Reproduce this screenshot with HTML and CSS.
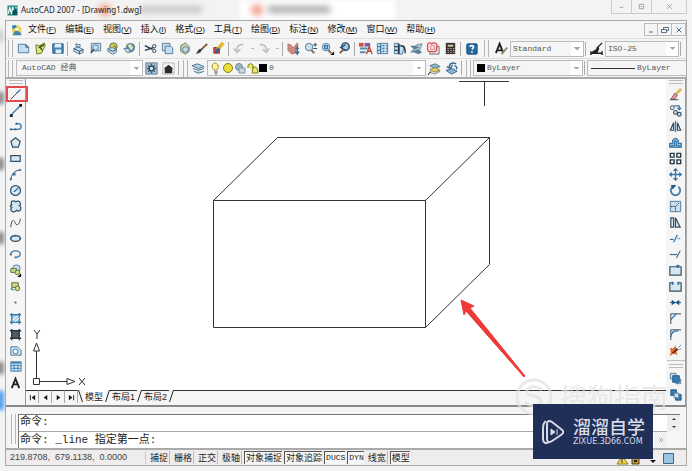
FILE: index.html
```html
<!DOCTYPE html>
<html lang="zh-CN">
<head>
<meta charset="utf-8">
<title>AutoCAD 2007 - [Drawing1.dwg]</title>
<link rel="stylesheet" href="styles.css">
</head>
<body>
<div class="desk" aria-hidden="true"><i class="tab"></i><i class="blob b1"></i><i class="smudge s1"></i><i class="blob b2"></i><i class="smudge s2"></i><i class="dot e0"></i><i class="dot e1"></i><i class="dot e2"></i><i class="dot e3"></i><i class="dot e4"></i><i class="dot blue"></i></div>
<header class="title">
  <svg class="logo" viewBox="0 0 12 12"><rect width="11" height="11" x=".5" y=".5" fill="#238b86"/><path d="M1 10L3 3l2 7 1-8 2 6 2-6" fill="none" stroke="#fff" stroke-width="1.2"/><path d="M6 7l3-4 2 4v4H6z" fill="#0b5260"/></svg>
  <h1>AutoCAD 2007 - [Drawing1.dwg]</h1>
  <div class="winbtns"><button aria-label="最小化"><svg viewBox="0 0 8 8"><path d="M2 5h4"/></svg></button><button aria-label="最大化"><svg viewBox="0 0 8 8"><path d="M1.500 1.500h5v5h-5zM3 4h2"/></svg></button><button class="wide" aria-label="关闭"><svg viewBox="0 0 8 8"><path d="M1.500 1.500l5 5M6.500 1.500l-5 5"/></svg></button></div>
</header>
<div class="frame">
  <nav class="menu">
    <svg class="doc" viewBox="0 0 14 14"><path d="M1 4l7-3 4 4v8H2z" fill="#e9cf56"/><path d="M1 2l4-1 2 3-5 2z" fill="#3b82bb"/><path d="M3 11c2-5 5-3 8-1l1 3H2z" fill="#3d86b7"/><path d="M4 5l4-1 2 3-4 1z" fill="#fff7b6"/></svg>
    <button>文件<small>(<u>F</u>)</small></button><button>编辑<small>(<u>E</u>)</small></button><button>视图<small>(<u>V</u>)</small></button><button>插入<small>(<u>I</u>)</small></button><button>格式<small>(<u>O</u>)</small></button><button>工具<small>(<u>T</u>)</small></button><button>绘图<small>(<u>D</u>)</small></button><button>标注<small>(<u>N</u>)</small></button><button>修改<small>(<u>M</u>)</small></button><button>窗口<small>(<u>W</u>)</small></button><button>帮助<small>(<u>H</u>)</small></button>
    <div class="docbtns"><button aria-label="最小化文档"><svg viewBox="0 0 8 8"><path d="M2 6h4"/></svg></button><button aria-label="还原文档"><svg viewBox="0 0 8 8"><path d="M2.500 3V1.500h5v3H6M.5 3.500h5v3h-5z"/></svg></button><button aria-label="关闭文档"><svg viewBox="0 0 8 8"><path d="M1.500 1.500l5 5M6.500 1.500l-5 5"/></svg></button></div>
  </nav>

  <div class="bar">
    <i class="grip"></i>
    <button class="t" aria-label="新建"><svg viewBox="0 0 16 16"><path class="lf" d="M2.500 3.500h8l3 3v6h-11z"/><path class="k" d="M10.500 3.500v3h3"/></svg></button>
    <button class="t" aria-label="打开"><svg viewBox="0 0 16 16"><path d="M3 4l4 1 5-3 1 3-4 8-5 1z" fill="#dce77a" stroke="#6d7b20"/><path d="M6 7l6-3M7 6l3 4" stroke="#344b24" stroke-width="1.500"/></svg></button>
    <button class="t" aria-label="保存"><svg viewBox="0 0 16 16"><path d="M3 3h11v10H3z" fill="#4587ba" stroke="#235378"/><path d="M5 3h7v4H5zM6 9h6v4H6z" fill="#dff1fd"/></svg></button>
    <i class="sep"></i>
    <button class="t" aria-label="打印"><svg viewBox="0 0 16 16"><path class="lf" d="M5 3l5 1-1 3 4 2v3l-4 2-6-3V8l3-1z"/><path class="k" d="M3 8l6 3 4-2M9 11v3M6 6l3 1"/></svg></button>
    <button class="t" aria-label="打印预览"><svg viewBox="0 0 16 16"><path class="lf" d="M3.500 2.500h10v8h-10z"/><circle class="lf" cx="8" cy="7" r="3"/><path class="k2" d="M6 9l-3 4"/></svg></button>
    <button class="t" aria-label="发布"><svg viewBox="0 0 16 16"><circle cx="9" cy="6" r="4" fill="#dbce4c" stroke="#57683e"/><path class="lf" d="M3 8l5-1 4 2v3l-4 2-5-3z"/><path class="k" d="M4 9l4 2 4-2M9 5l3 2"/></svg></button>
    <button class="t" aria-label="网络发布"><svg viewBox="0 0 16 16"><circle cx="9" cy="7" r="5" fill="#608995"/><path d="M6 5l3-2 3 4-2 3z" fill="#d8e7be"/><path class="lf" d="M2 8h5l2 4H5z"/></svg></button>
    <i class="sep"></i>
    <button class="t" aria-label="剪切"><svg viewBox="0 0 16 16"><path class="k2" d="M2 5l8 4M2 10l9-3"/><circle class="k" cx="12" cy="5.500" r="1.800"/><circle class="k" cx="12" cy="10.500" r="1.800"/></svg></button>
    <button class="t" aria-label="复制"><svg viewBox="0 0 16 16"><path class="lf" d="M2.500 2.500h8v8h-8z"/><path class="lf" d="M5.500 5.500h6l2 2v6h-8z"/></svg></button>
    <button class="t" aria-label="粘贴"><svg viewBox="0 0 16 16"><path d="M4 5l5-3 4 4v5l-4 3-5-3z" fill="#ccd6b2" stroke="#697653"/><circle class="lf" cx="9" cy="9" r="3"/></svg></button>
    <button class="t" aria-label="特性匹配"><svg viewBox="0 0 16 16"><path d="M14 3L8 9" stroke="#7d592e" stroke-width="2"/><path d="M9 8l-2 4-5 2 3-5z" fill="#343638"/></svg></button>
    <button class="t" aria-label="块编辑器"><svg viewBox="0 0 16 16"><path d="M3 7h6v6H3z" fill="#e24a3d" stroke="#8e302b"/><path d="M7 9l6-7" stroke="#e5b92c" stroke-width="4"/><path d="M5 12l4-4" stroke="#315f9a" stroke-width="3"/></svg></button>
    <i class="sep"></i>
    <button class="t" aria-label="放弃"><svg viewBox="0 0 16 16"><path class="g" d="M12 4C7 3 5 6 5 10M2 8l3 4 4-3"/></svg></button><button class="drop" aria-label="放弃列表"></button>
    <button class="t" aria-label="重做"><svg viewBox="0 0 16 16"><path class="g" d="M3 4c5-1 7 2 7 6M6 9l4 3 3-4"/></svg></button><button class="drop" aria-label="重做列表"></button>
    <i class="sep"></i>
    <button class="t" aria-label="平移"><svg viewBox="0 0 16 16"><path d="M2 3l3 1 3 3 4-5 1 2-2 5-1 4-4 1-4-4z" fill="#d08a7b" stroke="#9b6a60" stroke-width=".7"/><path d="M12 5v8M10 11l2 3 2-3M10 8h4" fill="none" stroke="#3d6f9b" stroke-width="1.500"/></svg></button>
    <button class="t" aria-label="实时缩放"><svg viewBox="0 0 16 16"><circle class="lf" cx="6.500" cy="6.500" r="4"/><path d="M9 10l3 3" stroke="#805d42" stroke-width="2"/><path class="k" d="M11 4h4M13 2v4M11 8h4"/></svg></button>
    <button class="t" aria-label="窗口缩放"><svg viewBox="0 0 16 16"><circle class="lf" cx="6.500" cy="6.500" r="4"/><path class="b2" d="M5 5h3v3H5z"/><path d="M9 10l3 3" stroke="#805d42" stroke-width="2"/><path d="M15 11v4h-4z" fill="#111"/></svg></button>
    <button class="t" aria-label="缩放上一个"><svg viewBox="0 0 16 16"><circle cx="9" cy="6" r="4" fill="#a4cae4" stroke="#29435e" stroke-width="1.500"/><path d="M9 4L4 7l5 3" stroke="#28517b" stroke-width="1.500" fill="none"/><path d="M7 9l-4 4" stroke="#805d42" stroke-width="2"/></svg></button>
    <i class="sep"></i>
    <button class="t" aria-label="特性"><svg viewBox="0 0 16 16"><path d="M1 2h5v4H1z" fill="#d35248"/><path d="M7 2h6v4H7z" fill="#845fa6"/><path d="M2 7h8v2H2zM2 11h6v2H2z" fill="#5989ac"/><path d="M9 14l3-8 3 8M10 11h4" stroke="#b2473d" stroke-width="1.500" fill="none"/></svg></button>
    <button class="t" aria-label="设计中心"><svg viewBox="0 0 16 16"><path class="lf" d="M2.500 2.500h11v11h-11z"/><path class="b2" d="M6 3v10M8 5h2M12 5h1M8 8h2M12 8h1M8 11h2M12 11h1M3 6h2M3 10h2"/></svg></button>
    <button class="t" aria-label="工具选项板"><svg viewBox="0 0 16 16"><path class="lf" d="M2.500 2.500h5v11h-5zM8 4l5 2-2 8H8z"/><path class="k2" d="M7 3v11M9 5c5 0 5 3 5 8M3 6h3M3 10h3"/></svg></button>
    <button class="t" aria-label="图纸集"><svg viewBox="0 0 16 16"><path d="M2 12l9-1 3-8-6 1z" fill="#a6c8d9" stroke="#7890a0"/><path d="M1 5h6l4 2-5 2zM3 11l7-2 4 3-4 2z" fill="#577e96"/></svg></button>
    <button class="t" aria-label="标记集"><svg viewBox="0 0 16 16"><path d="M6 6h8v8H4v-2" fill="#ddd" stroke="#777"/><path d="M2 3q2-2 4 0 2-2 5 0 2 2 0 4 1 3-1 4-2 1-4 0-3 1-4-1-1-2 0-3-1-2 0-4z" fill="#fbe4e3" stroke="#db4b54" stroke-width="1.300"/><path d="M5 5h4v4H5z" fill="none" stroke="#db8a8c"/></svg></button>
    <button class="t" aria-label="计算器"><svg viewBox="0 0 16 16"><path d="M3 2h10v12H3z" fill="#3d302e"/><path d="M5 4h6v2H5z" fill="#c6d6b1"/><path d="M5 8h1M8 8h1M11 8h1M5 10h1M8 10h1M11 10h1M5 12h1M8 12h1M11 12h1" stroke="#fff"/></svg></button>
    <i class="sep"></i>
    <button class="t" aria-label="帮助"><svg viewBox="0 0 16 16"><rect x="3" y="3" width="11" height="11" rx="1" fill="#246aa2" stroke="#174e7c"/><path d="M6 6c1-2 5-1 4 1L8.500 9M8.500 11v1.500" stroke="#fff" stroke-width="1.800" fill="none"/></svg></button>
    <i class="grip wide"></i>
    <button class="t" aria-label="文字样式"><svg viewBox="0 0 16 16"><path d="M2 13L6 3l4 10M4 10h5" fill="none" stroke="#222" stroke-width="2"/><path d="M14 7l-6 7" stroke="#8d8b64" stroke-width="2"/></svg></button>
    <select class="combo w74" aria-label="文字样式列表"><option>Standard</option></select>
    <i class="sep"></i>
    <button class="t" aria-label="标注样式"><svg viewBox="0 0 16 16"><path d="M14 2L8 8M2 13h12M2 11v4M14 11v4" fill="none" stroke="#222" stroke-width="1.500"/><path d="M10 6l1 2-2 5H4l-2-1 5-3z" fill="#222"/></svg></button>
    <select class="combo w74" aria-label="标注样式列表"><option>ISO-25</option></select>
    <i class="sep"></i>
  </div>

  <div class="bar low">
    <i class="grip"></i>
    <select class="combo work-space" aria-label="工作空间"><option>AutoCAD 经典</option></select>
    <button class="t" aria-label="工作空间设置"><svg viewBox="0 0 16 16"><path d="M2 2h12v12H2z" fill="#a9c2d5" stroke="#5f7e96"/><circle cx="8" cy="8" r="2.500" fill="#dceaf2" stroke="#254358" stroke-width="1.500"/><path d="M8 3v2M8 11v2M3 8h2M11 8h2M4.500 4.500l1.500 1.500M11.500 4.500L10 6M4.500 11.500L6 10M11.500 11.500L10 10" stroke="#35566f" stroke-width="1.500"/></svg></button>
    <button class="t" aria-label="我的工作空间"><svg viewBox="0 0 16 16"><path d="M2 2h12v12H2z" fill="none" stroke="#999" stroke-dasharray="2 1"/><path d="M3 8l5-4 5 4h-1v5H4V8z" fill="#292b2d"/></svg></button>
    <i class="sep"></i><i class="grip"></i>
    <button class="t" aria-label="图层特性管理器"><svg viewBox="0 0 16 16"><path d="M1 5l6-2 7 3-6 2zM2 8l6 2 6-2M3 11l5 2 6-2" fill="#b9d2e4" stroke="#4b7390"/></svg></button>
    <div class="combo layer"><svg viewBox="0 0 58 14"><path d="M5 9C1 5 4 2 6 2s5 3 2 7z" fill="#fff3a1" stroke="#a78d32"/><path d="M5 11h4M6 13h2" stroke="#555"/><circle cx="19" cy="7" r="4.500" fill="#eadf32" stroke="#897f23"/><circle cx="30" cy="6" r="3.500" fill="#9eb7c7" stroke="#6e899c"/><path d="M30 7h6v5h-6z" fill="#c9d7e0" stroke="#7c91a0"/><path d="M39 7V4q3-3 5 0v4M44 6q5-1 5 6h-6z" fill="#ebe568" stroke="#857f25"/><path d="M50 3h8v8h-8z" fill="#000"/></svg><select aria-label="图层"><option>0</option></select></div>
    <button class="t" aria-label="置为当前图层"><svg viewBox="0 0 16 16"><path d="M3 5l6-2 5 3-6 2z" fill="#91b7cf" stroke="#557a91"/><path d="M3 9l6-2 5 3-6 2z" fill="#e1cd6a" stroke="#94843b"/><path d="M3 12l5 2 6-3" stroke="#668797" fill="none"/><path d="M1 15l3-4" stroke="#111"/></svg></button>
    <button class="t" aria-label="上一个图层"><svg viewBox="0 0 16 16"><path d="M2 10l7-2 5 3-6 3z" fill="#8ab4d2" stroke="#426b8b"/><path d="M13 3C8 1 5 3 6 7M3 6l4 2 2-4M11 5q4 1 2 4" stroke="#356c9a" stroke-width="1.500" fill="none"/></svg></button>
    <i class="sep"></i><i class="grip"></i>
    <div class="combo color"><i class="swatch"></i><select aria-label="颜色"><option>ByLayer</option></select></div>
    <i class="sep"></i>
    <div class="combo ltype"><i class="line"></i><select aria-label="线型"><option>ByLayer</option></select></div>
  </div>

  <div class="work">
    <aside class="pal">
      <i class="hgrip"></i>
      <button class="on" aria-label="直线"><svg viewBox="0 0 16 16"><path class="k" d="M3 13L13 3"/><path class="b2" d="M9 7l4-4"/></svg></button>
      <button aria-label="构造线"><svg viewBox="0 0 16 16"><path class="b2" d="M3 13L13 3"/><path d="M2 12h3v3H2zM12 1h3v3h-3z" fill="#222"/></svg></button>
      <button aria-label="多段线"><svg viewBox="0 0 16 16"><path class="b2" d="M3 11h8c4 0 4-6 0-6H9"/><path d="M2 10h2v2H2zM7 10h2v2H7zM8 4h2v2H8z" fill="#235a91"/></svg></button>
      <button aria-label="正多边形"><svg viewBox="0 0 16 16"><path class="lfk" d="M8 3l5 4-2 6H5L3 7z"/></svg></button>
      <button aria-label="矩形"><svg viewBox="0 0 16 16"><path class="lfk" d="M3 5h10v6H3z"/><path class="b2" d="M2 11h2M12 5h2"/></svg></button>
      <button aria-label="圆弧"><svg viewBox="0 0 16 16"><path class="k" d="M3 14C3 8 7 4 13 3"/><path d="M2 12h2v2H2zM5 6h3v3H5zM12 2h2v2h-2z" fill="#316da5"/></svg></button>
      <button aria-label="圆"><svg viewBox="0 0 16 16"><circle class="lfk" cx="8" cy="8" r="5.300"/><path class="b2" d="M7 9l4-4M6 9h2"/></svg></button>
      <button aria-label="修订云线"><svg viewBox="0 0 16 16"><path class="lfk" d="M4 6q-2-4 2-4 2 0 2 1 4-2 5 1 1 2-1 3 3 2 1 5-2 2-4 0-2 3-5 1-2-2 0-4-3-1 0-3z"/></svg></button>
      <button aria-label="样条曲线"><svg viewBox="0 0 16 16"><path class="k" d="M3 13C4 2 7 6 8 9s5 1 5-5"/></svg></button>
      <button aria-label="椭圆"><svg viewBox="0 0 16 16"><ellipse class="lfk" cx="8" cy="8" rx="5" ry="3"/><path d="M2 7h2v2H2zM12 7h2v2h-2zM7 4h2v2H7z" fill="#316da5"/></svg></button>
      <button aria-label="椭圆弧"><svg viewBox="0 0 16 16"><path class="b2" d="M3 8c0-5 10-5 10-1 0 3-2 4-5 4"/><path d="M2 7h2v2H2zM7 10h2v2H7z" fill="#316da5"/></svg></button>
      <button aria-label="插入块"><svg viewBox="0 0 16 16"><circle class="lf" cx="9" cy="6" r="4"/><path class="gr" d="M3 6h6v4H3z"/><circle class="gr" cx="10" cy="10" r="2.500"/><path d="M14 11v4h-4z" fill="#111"/></svg></button>
      <button aria-label="创建块"><svg viewBox="0 0 16 16"><path class="gr" d="M4 4h7v5H4z"/><circle class="gr" cx="10" cy="10" r="2.500"/><path class="b2" d="M3 10l3 2"/></svg></button>
      <button aria-label="点"><svg viewBox="0 0 16 16"><path d="M7 7h2v2H7z" fill="#2869a5"/></svg></button>
      <button aria-label="图案填充"><svg viewBox="0 0 16 16"><path d="M4 4h8v8H4z" fill="#b7d6e9"/><path class="b2" d="M2 4h12M2 12h12M4 2v12M12 2v12"/><path d="M5 10l5-5M7 12l5-5" stroke="#fff"/></svg></button>
      <button aria-label="渐变色"><svg viewBox="0 0 16 16"><path d="M4 4h8v8H4z" fill="#525b62"/><path class="k2" d="M2 4h12M2 12h12M4 2v12M12 2v12"/></svg></button>
      <button aria-label="面域"><svg viewBox="0 0 16 16"><path class="lf" d="M3 4h7l4 4v5H3z"/><circle cx="8" cy="9" r="2.500" fill="#fff" stroke="#3477ad"/></svg></button>
      <button aria-label="表格"><svg viewBox="0 0 16 16"><path class="lf" d="M3 3h11v10H3z"/><path class="b2" d="M3 4h11"/><path d="M6.500 4v9M10.500 4v9M3 7h11M3 10h11" stroke="#397aad" stroke-width=".8"/></svg></button>
      <button aria-label="多行文字"><svg viewBox="0 0 16 16"><path d="M4 14L8 4l4 10M6 10h5" fill="none" stroke="#222" stroke-width="2"/></svg></button>
    </aside>
    <main class="view">
      <div class="canvas">
        <svg class="model" width="641" height="312" viewBox="0 0 641 312">
          <g fill="none" stroke="#333"><path d="M187.500 121.500h212v127h-212zM187.500 121.500L251.500 58.500h212v127L399.500 248.500M399.500 121.500L463.500 58.500"/><path d="M433 2.500h50M458.500 2v25"/></g>
          <path d="M435 221l13 6-4 2 55 68-1 1-58-66-2 4z" fill="#ed3a36" stroke="#ed3a36"/>
        </svg>
        <svg class="ucs" width="70" height="64" viewBox="0 0 70 64"><path d="M7.500 51.500h6v6h-6zM10.500 51V24M14 54.500h27M10.500 16l3 8h-6zM49 54.500l-8-3v6zM8 3l3 4 3-4M11 7v5M53 51l6 7M59 51l-6 7" fill="none" stroke="#333"/></svg>
      </div>
      <div class="tabs">
        <button class="n" aria-label="第一个"><svg viewBox="0 0 8 8"><path d="M1 1h1v6H1zM7 1v6L3 4z"/></svg></button><button class="n" aria-label="上一个"><svg viewBox="0 0 8 8"><path d="M6 1v6L2 4z"/></svg></button><button class="n" aria-label="下一个"><svg viewBox="0 0 8 8"><path d="M2 1v6l4-3z"/></svg></button><button class="n" aria-label="最后一个"><svg viewBox="0 0 8 8"><path d="M1 1v6l4-3zM6 1h1v6H6z"/></svg></button>
        <svg class="sl" viewBox="0 0 5 12"><path d="M.5 0l4 12"/></svg><button class="cur">模型</button><svg class="sl" viewBox="0 0 5 12"><path d="M4.500 0l-4 12"/></svg><button>布局1</button><svg class="sl" viewBox="0 0 5 12"><path d="M4.500 0l-4 12"/></svg><button>布局2</button><svg class="sl" viewBox="0 0 5 12"><path d="M4.500 0l-4 12"/></svg><i class="rest"></i>
      </div>
    </main>
    <aside class="pal right">
      <i class="hgrip"></i>
      <button aria-label="删除"><svg viewBox="0 0 16 16"><path d="M14 2L8 8" stroke="#d9b957" stroke-width="3"/><path d="M7 7l3 2-3 4H3z" fill="#e29a98" stroke="#774850" stroke-width=".8"/><path class="k" d="M2 13.500h9"/></svg></button>
      <button aria-label="复制对象"><svg viewBox="0 0 16 16"><circle class="k" cx="4.500" cy="5" r="2"/><circle class="lfk" cx="8" cy="10" r="2"/><circle class="lfk" cx="12" cy="12" r="2"/><path class="b2" d="M6 3h6v4M10 5l2 2 2-2"/></svg></button>
      <button aria-label="镜像"><svg viewBox="0 0 16 16"><path class="lfk" d="M6 4v8H2.500zM10 4v8h3.500z"/><path class="b2" d="M8 2v12"/></svg></button>
      <button aria-label="偏移"><svg viewBox="0 0 16 16"><path class="lf" d="M2 13V9h3V6q3-5 6 0v3h3v4z"/><path class="b2" d="M2 13V9h3V6q3-5 6 0v3h3v4zM4 12v-1h3V7q1-2 2 0v4h3v1"/></svg></button>
      <button aria-label="阵列"><svg viewBox="0 0 16 16"><path class="k2" d="M2.500 2.500h4v4h-4zM9.500 2.500h4v4h-4zM2.500 9.500h4v4h-4zM9.500 9.500h4v4h-4z"/></svg></button>
      <button aria-label="移动"><svg viewBox="0 0 16 16"><path class="b2" d="M8 3v10M3 8h10"/><path d="M8 1l3 3H5zM8 15l-3-3h6zM1 8l3-3v6zM15 8l-3 3V5z" fill="#356f9f"/></svg></button>
      <button aria-label="旋转"><svg viewBox="0 0 16 16"><path d="M5 4a5 5 0 1 0 6 0" fill="none" stroke="#4a7fa7" stroke-width="2"/><path d="M3 2h6L5 7z" fill="#285982"/></svg></button>
      <button aria-label="缩放"><svg viewBox="0 0 16 16"><path class="lf" d="M2.500 2.500h11v11h-11z"/><path class="k" d="M3 8h5v5M8 8l4-4" stroke-dasharray="2 1"/></svg></button>
      <button aria-label="拉伸"><svg viewBox="0 0 16 16"><path class="lfk" d="M3 3h3v10H3zM8 3l5 10H8z"/></svg></button>
      <button aria-label="修剪"><svg viewBox="0 0 16 16"><path class="b2" d="M2 9h4M6 12l4-8"/><path class="b2" d="M10 8h4" stroke-dasharray="1 1"/></svg></button>
      <button aria-label="延伸"><svg viewBox="0 0 16 16"><path class="b2" d="M2 8h8"/><path class="k" d="M9 12l4-8"/></svg></button>
      <button aria-label="打断于点"><svg viewBox="0 0 16 16"><path class="lfk" d="M2 4h12v9H2z"/><path d="M9 2h3v3H9z" fill="#356f9f"/></svg></button>
      <button aria-label="打断"><svg viewBox="0 0 16 16"><path class="lfk" d="M5 4H2v9h12V4h-3"/><path d="M4 3h2v3H4zM10 3h2v3h-2z" fill="#356f9f"/></svg></button>
      <button aria-label="合并"><svg viewBox="0 0 16 16"><path class="b2" d="M2 8h12"/><path d="M4 5l4 3-4 3zM12 5L8 8l4 3z" fill="#20547e"/></svg></button>
      <button aria-label="倒角"><svg viewBox="0 0 16 16"><path class="k" d="M3 14V3h11"/><path class="b2" d="M3 9l6-6"/></svg></button>
      <button aria-label="圆角"><svg viewBox="0 0 16 16"><path class="k" d="M3 14V3h11"/><path class="b2" d="M3 11q0-7 8-7"/></svg></button>
      <button aria-label="分解"><svg viewBox="0 0 16 16"><path d="M2 5l3 1 3-3 1 3 3 1-3 2 1 4-4-2-4 3 1-4z" fill="#df6e30"/><path d="M5 11l5-5" stroke="#692d26" stroke-width="2"/><path d="M11 5l3-3M12 7l2-1" stroke="#6089a2"/></svg></button>
      <i class="hr"></i><i class="hgrip"></i>
      <button aria-label="前置"><svg viewBox="0 0 16 16"><path class="lf" d="M2.500 2.500h6v6h-6zM8.500 8.500h5v5h-5z"/><path d="M5 5h7v7H5z" fill="#397baf" stroke="#245c8a"/></svg></button>
      <button aria-label="后置"><svg viewBox="0 0 16 16"><path d="M3 3h6v6H3zM8 8h6v6H8z" fill="#397baf" stroke="#245c8a"/><path class="lf" d="M6.500 6.500h5v5h-5z"/></svg></button>
    </aside>
  </div>

  <section class="cmd">
    <i class="grip"></i>
    <div class="lines"><output>命令:</output><div class="prompt"><input aria-label="命令行" value="命令: _line 指定第一点:"><button aria-label="向右滚动"><svg viewBox="0 0 6 6"><path d="M1 1l2 2-2 2M3 1l2 2-2 2"/></svg></button></div></div>
    <div class="scroll"><i class="up"></i><i class="down"></i></div>
  </section>
  <footer class="status">
    <output class="xy">219.8708,&nbsp; 679.1138,&nbsp; 0.0000</output>
    <button>捕捉</button><button>栅格</button><button>正交</button><button>极轴</button><button class="in">对象捕捉</button><button class="in">对象追踪</button><button class="in m">DUCS</button><button class="in m">DYN</button><button>线宽</button><button class="in">模型</button>
    <svg class="tray" viewBox="0 0 74 14"><path d="M11 13l5-8 6 8z" fill="#f4d84b" stroke="#927d28"/><path d="M16 8v4" stroke="#333"/><path d="M26 6h7v7h-7z" fill="#bb942b" stroke="#574515"/><path d="M28 10h3" stroke="#222" stroke-width="2"/><path d="M44 9h6l-3 3z" fill="#111"/><path d="M57.500 2.500h10v10h-10z" fill="#9dc4e2" stroke="#3d6687"/></svg>
  </footer>
</div>
<div class="ghost" aria-hidden="true"><svg viewBox="0 0 40 40"><circle cx="20" cy="20" r="17"/><path d="M28 13c-6-6-17-3-15 3 2 4 14 2 14 8 0 5-10 7-16 1"/></svg><span>搜狗指南</span></div>
<div class="brand">
  <svg viewBox="0 0 24 26"><path d="M5 2C2 4 2 7 2 12v8c0 4 3 5 6 3" fill="none" stroke="#d7dbe7" stroke-width="2"/><path d="M6 5c0-3 2-4 5-2l9 7c3 2 3 4 0 6l-9 6c-3 2-5 1-5-2z" fill="none" stroke="#d7dbe7" stroke-width="2"/><path d="M10 10l4 3-4 3zM16 10v6" fill="#d7dbe7" stroke="#d7dbe7"/></svg>
  <div><strong>溜溜自学</strong><small>ZIXUE.3D66.COM</small></div>
</div>
</body>
</html>
```

FILE: styles.css
```css
* { box-sizing: border-box; }
body {
  margin: 0;
  height: 100vh;
  min-height: 471px;
  padding: 0 5px 5px;
  display: flex;
  flex-direction: column;
  position: relative;
  overflow: hidden;
  background: #f3f3f3;
  color: #222;
  font: 9px/12px "Liberation Sans", "Noto Sans CJK SC", sans-serif;
}
button, select, input { font: inherit; color: inherit; margin: 0; padding: 0; border: 0; border-radius: 0; background: none; outline: 0; }
i { display: block; flex: none; }
svg { display: block; flex: none; }

/* blurred desktop showing through the glass border */
.desk { position: absolute; inset: 0; overflow: hidden; }
.desk i { position: absolute; }
.tab { left: 240px; top: 0; width: 155px; height: 20px; background: #fff; filter: blur(2px); }
.blob { width: 12px; height: 12px; top: 4px; border-radius: 50%; background: #f3a392; filter: blur(3px); }
.b1 { left: 99px; }
.b2 { left: 251px; }
.smudge { top: 6px; height: 7px; background: #aaa; filter: blur(3px); }
.s1 { left: 140px; width: 62px; opacity: .6; }
.s2 { left: 268px; width: 62px; }
.dot { left: -3px; width: 7px; height: 12px; background: #888; filter: blur(2px); }
.e0 { top: 92px; }
.e1 { top: 158px; }
.e2 { top: 232px; }
.e3 { top: 30px; opacity: .3; }
.e4 { top: 362px; }
.desk .blue { top: 391px; height: 19px; background: #4a9cf0; }

.title { position: relative; height: 20px; flex: none; display: flex; align-items: center; padding-left: 2px; }
.logo { width: 11px; height: 11px; }
.title h1 { margin: 0 auto 0 3px; font: 8px/12px "Noto Sans", sans-serif; color: #222; }
.winbtns { display: flex; align-self: flex-start; height: 14px; border: 1px solid #ccc; border-top: 0; }
.winbtns button { width: 20px; display: grid; place-items: center; border-right: 1px solid #ccc; }
.winbtns .wide { width: 34px; border: 0; }
.winbtns svg { width: 7px; height: 7px; fill: none; stroke: #999; }

.frame { position: relative; flex: 1; min-height: 0; display: flex; flex-direction: column; border: 1px solid #aaa; background: #f5f5f5; }
.menu { height: 17px; flex: none; display: flex; align-items: center; gap: 9px; padding-left: 5px; }
.menu > button { white-space: nowrap; color: #111; }
.menu small { font-size: 8px; }
.menu u { text-underline-offset: 1px; }
.doc { width: 12px; height: 12px; margin-right: -4px; }
.docbtns { margin-left: auto; display: flex; }
.docbtns button { width: 14px; height: 13px; display: grid; place-items: center; border: 1px solid #bbb; border-left-width: 0; }
.docbtns button:first-child { border-left-width: 1px; }
.docbtns svg { width: 8px; height: 8px; fill: none; stroke: #52718c; }

.bar { height: 20px; flex: none; display: flex; align-items: center; border-top: 1px solid #ddd; overflow: hidden; }
.low { height: 19px; }
.grip { width: 5px; height: 17px; margin: 0 2px; border: solid #b5b5b5; border-width: 0 1px; }
.grip.wide { margin: 0 4px; }
.sep { width: 1px; height: 14px; margin: 0 2px 0 1px; background: #aaa; }
.t { width: 17px; height: 17px; flex: none; display: grid; place-items: center; }
.t svg { width: 15px; height: 15px; }
.drop { width: 8px; height: 8px; flex: none; background: linear-gradient(#bbb, #bbb) center / 3px 1px no-repeat; }
.combo { height: 16px; border: 1px solid #bbb; font: 8px/12px "Liberation Mono", "Noto Sans CJK SC", monospace; color: #555; display: flex; align-items: center; flex: none; }
select {
  appearance: none;
  min-width: 0;
  padding-left: 2px;
  background:
    conic-gradient(from -45deg at 50% 100%, #aaa 90deg, transparent 0) right 3px center / 6px 3px no-repeat,
    linear-gradient(#fff, #fff) right / 12px 100% no-repeat;
}
.combo select { flex: 1; height: 14px; }
select.combo, .combo select { color: #555; }
.w74 { width: 74px; }
.work-space { width: 127px; padding-left: 5px; margin-left: 1px; }
.layer { width: 219px; }
.layer svg { width: 58px; height: 14px; margin-left: 1px; }
.color { width: 110px; padding-left: 3px; }
.swatch { width: 8px; height: 8px; background: #000; }
.ltype { flex: 1; min-width: 60px; padding-left: 3px; border-right: 0; }
.line { width: 44px; height: 1px; background: #333; }
.ltype select { background: none; }

.lf { fill: #c6deef; stroke: #527c9c; }
.lfk { fill: #d7e8f3; stroke: #355064; stroke-width: 1.3px; }
.gr { fill: #c9db8b; stroke: #577037; }
.k { fill: none; stroke: #334350; }
.k2 { fill: none; stroke: #293a46; stroke-width: 1.5px; }
.b2 { fill: none; stroke: #397aad; stroke-width: 1.4px; }
.g { fill: none; stroke: #bfc3c4; stroke-width: 2px; }

.work { flex: 1; min-height: 0; display: flex; border-top: 2px solid #aaa; }
.pal { width: 20px; flex: none; display: flex; flex-direction: column; align-items: center; border-right: 1px solid #999; }
.pal button { position: relative; width: 18px; height: 16px; flex: none; display: grid; place-items: center; }
.pal svg { width: 15px; height: 15px; }
.hgrip { width: 14px; height: 4px; margin: 1px 0 2px; border: solid #bbb; border-width: 1px 0; }
.hr { width: 18px; height: 1px; margin: 2px 0; background: #bbb; }
.pal .on::after { content: ""; position: absolute; inset: 0 -3px 0 -1px; border: 2px solid #e34a4d; z-index: 2; }
.view { flex: 1; min-width: 0; display: flex; flex-direction: column; padding-bottom: 2px; }
.canvas { position: relative; flex: 1; min-height: 0; background: #fff; overflow: hidden; }
.ucs { position: absolute; left: 0; bottom: -1px; }
.tabs { height: 13px; flex: none; display: flex; color: #222; }
.tabs button { padding: 0 2px; border-top: 1px solid #333; line-height: 11px; }
.tabs .cur { border-color: #fff; background: #fff; }
.tabs .n { width: 13px; padding: 0; display: grid; place-items: center; border-right: 1px solid #aaa; }
.n svg { width: 7px; height: 7px; fill: #111; }
.sl { width: 5px; height: 12px; fill: none; stroke: #222; }
.rest { flex: 1; border-top: 1px solid #333; }

.cmd { flex: none; height: 43px; padding: 7px 6px 0 3px; display: flex; border-top: 2px solid #888; }
.cmd .grip { height: 30px; }
.lines { flex: 1; min-width: 0; border: solid #777; border-width: 1px 0 0 1px; background: #fff; font: 11px/15px "Liberation Mono", "Noto Sans CJK SC", monospace; }
.lines output { display: block; height: 17px; padding-left: 1px; border-bottom: 1px solid #aaa; }
.prompt { display: flex; height: 16px; }
.prompt input { flex: 1; min-width: 0; padding-left: 1px; }
.prompt button { width: 13px; display: grid; place-items: center; background: #f0f0f0; }
.prompt svg { width: 6px; height: 6px; fill: none; stroke: #aaa; }
.scroll { width: 13px; height: 17px; display: flex; flex-direction: column; align-items: center; justify-content: space-around; border-top: 1px solid #777; background: #eee; }
.up, .down { border: 2px solid transparent; }
.up { border-top: 0; border-bottom-color: #333; }
.down { border-bottom: 0; border-top-color: #333; }
.status { height: 17px; flex: none; display: flex; align-items: center; gap: 2px; padding: 0 6px 0 3px; border-top: 2px solid #aaa; background: #eeecec; }
.xy { width: 137px; height: 13px; padding-left: 1px; border: solid #ccc; border-width: 0 1px 0 0; white-space: nowrap; color: #444; }
.status button { height: 13px; padding: 0 1px 0 2px; border-right: 1px solid #bbb; line-height: 12px; white-space: nowrap; }
.status .in { padding: 0 0 0 1px; border: solid #555; border-width: 1px 0 0 1px; background: #f7f7f7; }
.status .m { font: 8px/12px "Liberation Mono", monospace; }
.tray { width: 74px; height: 14px; margin-left: auto; }

.ghost { position: absolute; right: 24px; bottom: 54px; display: flex; align-items: center; gap: 6px; color: #e2e2e2; font: 27px/30px "Noto Sans CJK SC", sans-serif; opacity: .7; }
.ghost svg { width: 40px; height: 40px; fill: none; stroke: #e2e2e2; stroke-width: 3; }
.brand { position: absolute; right: 39px; bottom: 12px; width: 120px; height: 55px; display: flex; align-items: center; gap: 8px; padding-left: 8px; background: #202f57; color: #d7dbe7; }
.brand svg { width: 24px; height: 26px; }
.brand div { display: flex; flex-direction: column; gap: 2px; }
.brand strong { font: 500 18px/18px "Noto Sans CJK SC", sans-serif; }
.brand small { font: 8px/10px "DejaVu Sans", sans-serif; white-space: nowrap; }
```
